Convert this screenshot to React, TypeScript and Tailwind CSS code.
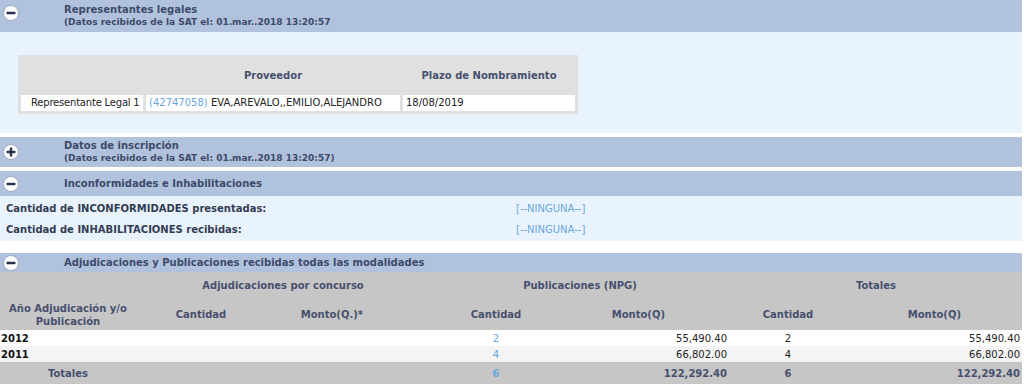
import React from "react";

function Icon({ plus }: { plus?: boolean }) {
  return (
    <svg width="16" height="16" viewBox="0 0 16 16" className="shrink-0">
      <circle cx="8" cy="8" r="7.5" fill="#ffffff" stroke="#7d8bab" strokeWidth="0.6" />
      <rect x="3.5" y="6.8" width="9" height="2.4" rx="0.6" fill="#29314a" />
      {plus && <rect x="6.8" y="3.5" width="2.4" height="9" rx="0.6" fill="#29314a" />}
    </svg>
  );
}

function Header({
  title,
  sub,
  plus,
  h,
  iconPad = "",
}: {
  title: string;
  sub?: string;
  plus?: boolean;
  h: string;
  iconPad?: string;
}) {
  return (
    <div className={`flex items-center bg-[#b1c2dc] ${h}`}>
      <div className={`w-[64px] pl-[3px] flex items-center ${iconPad}`}>
        <Icon plus={plus} />
      </div>
      <div className="flex flex-col text-[#3d4a6b] font-bold leading-[13px]">
        <span className="text-[10px]">{title}</span>
        {sub && <span className="text-[9px]">{sub}</span>}
      </div>
    </div>
  );
}

export default function App() {
  const th = "font-bold text-[#46506e] text-[10px]";
  return (
    <div className="w-[1022px] bg-white font-['DejaVu_Sans',Verdana,sans-serif] text-[10px] text-[#222]">
      <Header
        h="h-[32px]"
        iconPad="pb-[7px]"
        title="Representantes legales"
        sub="(Datos recibidos de la SAT el: 01.mar..2018 13:20:57"
      />
      <div className="bg-[#e9f3fd] h-[101px] pt-[23px] pl-[18px]">
        <table className="border-separate border-spacing-[3px] bg-[#e0e0e0] w-[560px] text-[10px] table-fixed">
          <colgroup>
            <col className="w-[122px]" />
            <col className="w-[254px]" />
            <col />
          </colgroup>
          <thead>
            <tr className="h-[34px]">
              <th></th>
              <th className={th}>Proveedor</th>
              <th className={th}>Plazo de Nombramiento</th>
            </tr>
          </thead>
          <tbody>
            <tr className="h-[16px]">
              <td className="bg-white pl-[10px] whitespace-nowrap text-[#222] leading-[16px] tracking-[-0.2px]">
                Representante Legal 1
              </td>
              <td className="bg-white px-[3px] whitespace-nowrap leading-[16px]">
                <span className="text-[#6aa7dc]">(42747058)</span> EVA,AREVALO,,EMILIO,ALEJANDRO
              </td>
              <td className="bg-white px-[3px] leading-[16px]">18/08/2019</td>
            </tr>
          </tbody>
        </table>
      </div>
      <div className="h-[4px]" />
      <Header
        h="h-[30px]"
        plus
        title="Datos de inscripción"
        sub="(Datos recibidos de la SAT el: 01.mar..2018 13:20:57)"
      />
      <div className="h-[4px]" />
      <Header h="h-[25px]" title="Inconformidades e Inhabilitaciones" />
      <div className="bg-[#e9f3fd] h-[45px] pl-[6px] pt-[6px] flex flex-col gap-[8px] leading-[13px]">
        <div className="flex">
          <span className="w-[510px] font-bold text-[#333c52]">
            Cantidad de INCONFORMIDADES presentadas:
          </span>
          <span className="text-[#6aa7dc]">[--NINGUNA--]</span>
        </div>
        <div className="flex">
          <span className="w-[510px] font-bold text-[#333c52]">
            Cantidad de INHABILITACIONES recibidas:
          </span>
          <span className="text-[#6aa7dc]">[--NINGUNA--]</span>
        </div>
      </div>
      <div className="h-[12px]" />
      <Header h="h-[19px]" title="Adjudicaciones y Publicaciones recibidas todas las modalidades" />
      <table className="w-[1022px] border-collapse table-fixed text-[10px]">
        <colgroup>
          <col className="w-[136px]" />
          <col className="w-[130px]" />
          <col className="w-[164px]" />
          <col className="w-[132px]" />
          <col className="w-[168px]" />
          <col className="w-[116px]" />
          <col />
        </colgroup>
        <thead className="bg-[#c6c6c6]">
          <tr className="h-[26px]">
            <th></th>
            <th colSpan={2} className={th}>Adjudicaciones por concurso</th>
            <th colSpan={2} className={th}>Publicaciones (NPG)</th>
            <th colSpan={2} className={th}>Totales</th>
          </tr>
          <tr className="h-[32px]">
            <th className={`${th} leading-[13px] pt-[1px]`}>Año Adjudicación y/o Publicación</th>
            <th className={th}>Cantidad</th>
            <th className={`${th} text-right pr-[67px]`}>Monto(Q.)*</th>
            <th className={th}>Cantidad</th>
            <th className={`${th} text-right pr-[65px]`}>Monto(Q)</th>
            <th className={th}>Cantidad</th>
            <th className={`${th} text-right pr-[61px]`}>Monto(Q)</th>
          </tr>
        </thead>
        <tbody>
          <tr className="h-[16px] bg-white">
            <td className="font-bold text-[#111] pl-[1px]">2012</td>
            <td></td>
            <td></td>
            <td className="text-center text-[#6aa7dc]">2</td>
            <td className="text-right pr-[3px]">55,490.40</td>
            <td className="text-center">2</td>
            <td className="text-right pr-[2px]">55,490.40</td>
          </tr>
          <tr className="h-[16px] bg-[#f4f4f4]">
            <td className="font-bold text-[#111] pl-[1px]">2011</td>
            <td></td>
            <td></td>
            <td className="text-center text-[#6aa7dc]">4</td>
            <td className="text-right pr-[3px]">66,802.00</td>
            <td className="text-center">4</td>
            <td className="text-right pr-[2px]">66,802.00</td>
          </tr>
          <tr className="h-[22px] bg-[#c6c6c6] font-bold text-[#46506e]">
            <td className="text-center">Totales</td>
            <td></td>
            <td></td>
            <td className="text-center text-[#6aa7dc]">6</td>
            <td className="text-right pr-[3px]">122,292.40</td>
            <td className="text-center">6</td>
            <td className="text-right pr-[2px]">122,292.40</td>
          </tr>
        </tbody>
      </table>
    </div>
  );
}
